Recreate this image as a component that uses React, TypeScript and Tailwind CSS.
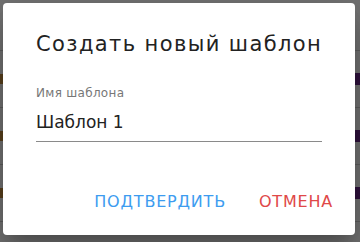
import React from "react";

export default function App() {
  const rows = [0, 1, 2, 3];
  return (
    <div className="relative w-[360px] h-[242px] overflow-hidden bg-white" style={{ fontFamily: '"DejaVu Sans", sans-serif' }}>
      <div className="flex flex-col">
        <div className="h-[51px] border-b border-[#d0d0d0]" />
        {rows.map((r) => (
          <div key={r} className="h-[57px] border-b border-[#d0d0d0] flex items-center justify-between">
            <div className="w-[4px] h-[10px] bg-[#c89040]" />
            <div className="w-[5px] h-[12px] bg-[#6a2c8a]" />
          </div>
        ))}
      </div>
      <div className="absolute inset-0 bg-black/55" />
      <div className="absolute left-[3px] top-[3px] w-[352px] h-[232px] bg-white rounded-[4px] shadow-[0_11px_15px_-7px_rgba(0,0,0,0.2),0_24px_38px_3px_rgba(0,0,0,0.14),0_9px_46px_8px_rgba(0,0,0,0.12)] flex flex-col">
        <div className="pl-[33px] pt-[26px] text-[21px] leading-[30px] text-[#222] tracking-[1.4px]">Создать новый шаблон</div>
        <div className="pl-[33px] pr-[33px] mt-[26px] flex flex-col">
          <div className="text-[12px] leading-[16px] text-[#777] tracking-[0.3px]">Имя шаблона</div>
          <div className="mt-[9px] text-[17px] leading-[24px] text-[#222] pb-[7px] border-b border-[#8a8a8a]">Шаблон 1</div>
        </div>
        <div className="flex-1" />
        <div className="flex justify-end items-center gap-[33px] pr-[22px] pb-[21px] text-[16px] leading-[24px] tracking-[0.8px]">
          <span className="text-[#3d9cf0]">ПОДТВЕРДИТЬ</span>
          <span className="text-[#e04848]">ОТМЕНА</span>
        </div>
      </div>
    </div>
  );
}
